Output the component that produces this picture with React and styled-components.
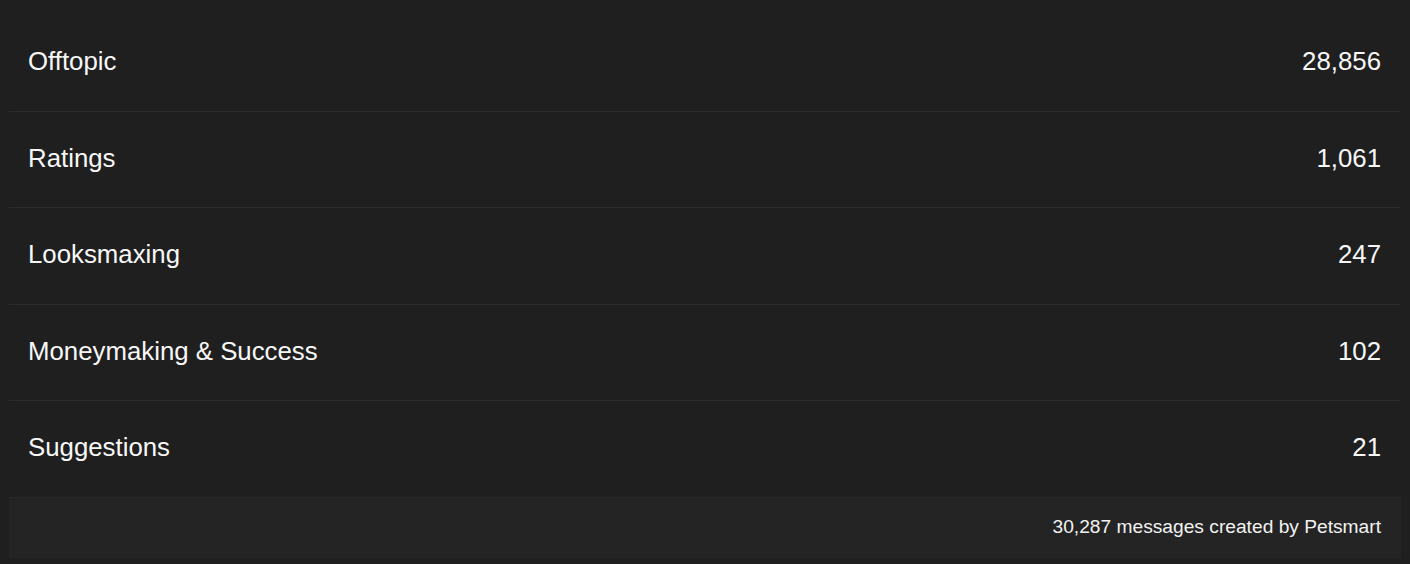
import React from "react";
import styled, { createGlobalStyle } from "styled-components";

const Global = createGlobalStyle`
  html, body { margin: 0; padding: 0; background: #1f1f1f; }
  body { font-family: "Liberation Sans", Arial, Helvetica, sans-serif; color: #f7f7f7; }
`;

const Page = styled.div`
  padding: 15px 9px 0 9px;
  background: #1f1f1f;
  min-height: 564px;
  box-sizing: border-box;
`;

const List = styled.div`
  display: flex;
  flex-direction: column;
`;

const Row = styled.div`
  display: flex;
  align-items: center;
  justify-content: space-between;
  height: 96.5px;
  box-sizing: border-box;
  padding: 0 20px 2px 19px;
  border-bottom: 1px solid #2a2a2a;
  font-size: 25.8px;
`;

const Name = styled.span`
  color: #f7f7f7;
`;

const Count = styled.span`
  color: #f7f7f7;
`;

const Footer = styled.div`
  display: flex;
  align-items: center;
  justify-content: flex-end;
  height: 60px;
  padding: 0 20px 1px;
  box-sizing: border-box;
  background: #242424;
  font-size: 19.2px;
  color: #f2f2f2;
`;

const rows = [
  ["Offtopic", "28,856"],
  ["Ratings", "1,061"],
  ["Looksmaxing", "247"],
  ["Moneymaking & Success", "102"],
  ["Suggestions", "21"],
];

export default function App() {
  return (
    <>
      <Global />
      <Page>
        <List>
          {rows.map(([n, c]) => (
            <Row key={n}>
              <Name>{n}</Name>
              <Count>{c}</Count>
            </Row>
          ))}
        </List>
        <Footer>30,287 messages created by Petsmart</Footer>
      </Page>
    </>
  );
}
